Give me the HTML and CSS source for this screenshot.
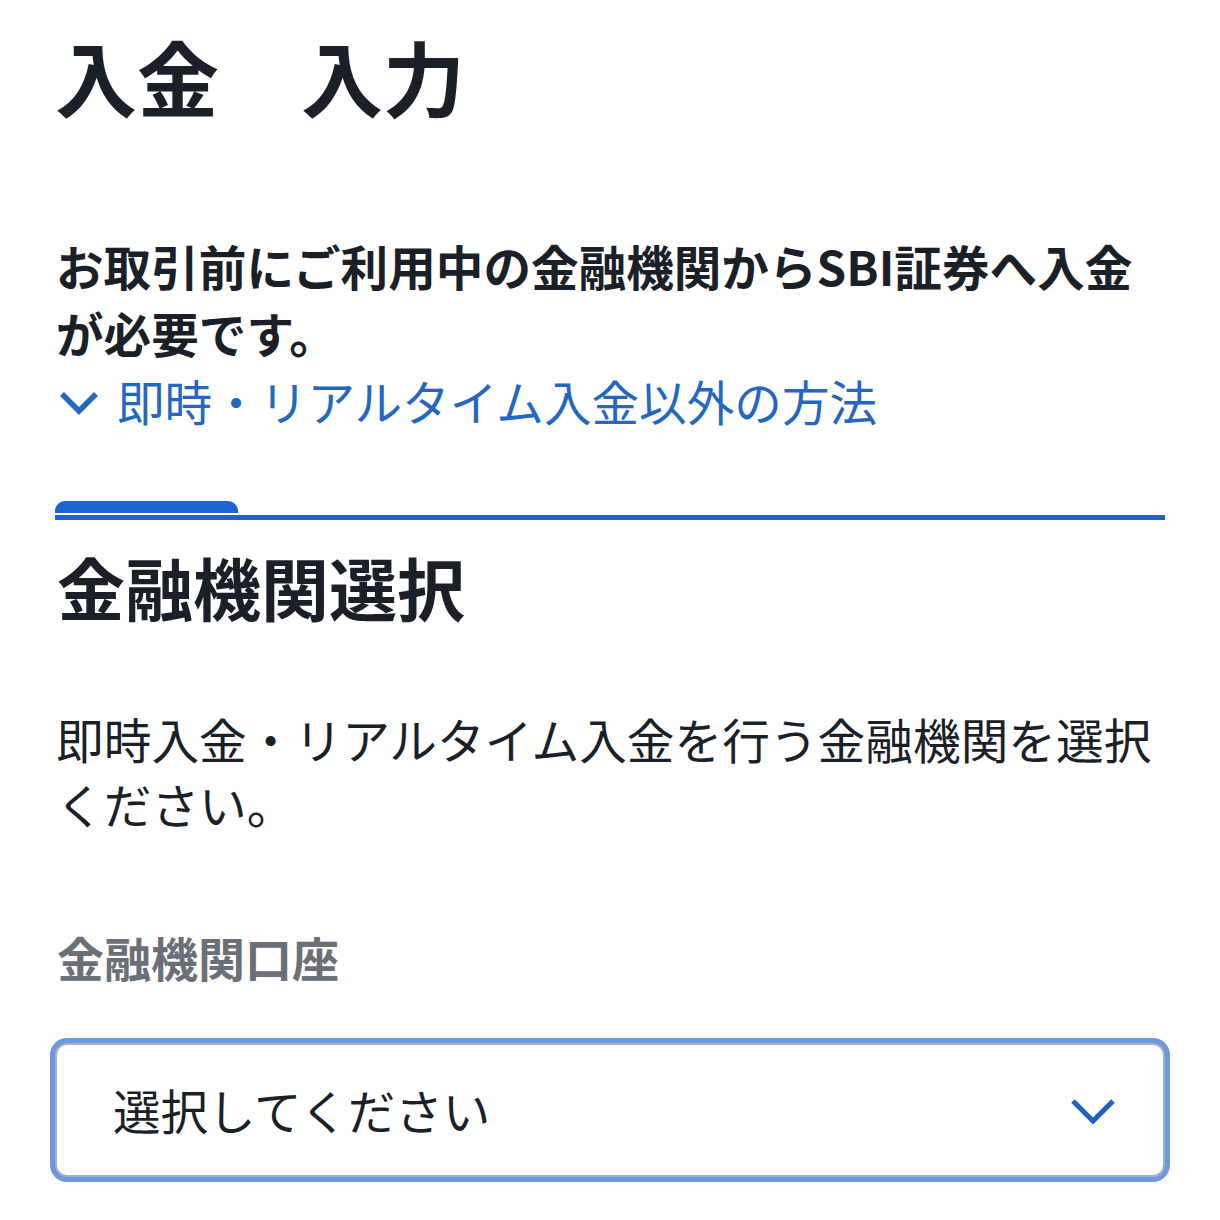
FILE: index.html
```html
<!DOCTYPE html>
<html lang="ja">
<head>
<meta charset="utf-8">
<title>入金 入力</title>
<link rel="stylesheet" href="styles.css">
</head>
<body>
<main class="page">
  <h1 class="title">入金　入力</h1>
  <p class="lead">お取引前にご利用中の金融機関からSBI証券へ入金が必要です。</p>
  <a class="toggle" href="#">
    <svg class="toggle-icon" viewBox="0 0 40 26" width="40" height="26" aria-hidden="true"><path d="M3 4 L20 21 L37 4" fill="none" stroke="currentColor" stroke-width="5.5"/></svg>
    <span>即時・リアルタイム入金以外の方法</span>
  </a>
  <div class="steps">
    <div class="step-active"></div>
  </div>
  <h2 class="section-title">金融機関選択</h2>
  <p class="desc">即時入金・リアルタイム入金を行う金融機関を選択ください。</p>
  <div class="field-label">金融機関口座</div>
  <div class="select">
    <span class="select-text">選択してください</span>
    <svg class="select-icon" viewBox="0 0 46 30" width="46" height="30" aria-hidden="true"><path d="M3 4 L23 24 L43 4" fill="none" stroke="currentColor" stroke-width="5"/></svg>
  </div>
</main>
</body>
</html>
```

FILE: styles.css
```css
* { box-sizing: border-box; }
html, body { margin: 0; padding: 0; background: #ffffff; }
body {
  font-family: "Noto Sans CJK JP", "Noto Sans", sans-serif;
  color: #1a1f28;
}
.page {
  padding: 27px 55px 40px 55px;
}
.title {
  margin: 0;
  font-size: 82px;
  line-height: 98px;
  font-weight: 700;
  letter-spacing: 0;
}
.lead {
  margin: 107px 0 0 0;
  font-size: 47.6px;
  line-height: 67px;
  font-weight: 700;
  padding-left: 1px;
}
.toggle {
  display: flex;
  align-items: center;
  gap: 18px;
  height: 70px;
  color: #2467c3;
  text-decoration: none;
  font-size: 47.6px;
  line-height: 70px;
  padding-left: 4px;
}
.toggle-icon { flex: none; width: 40px; height: 26px; margin-top: 4px; }
.steps {
  margin-top: 65px;
  border-bottom: 5px solid #1f63c4;
  height: 19px;
}
.step-active {
  width: 183px;
  height: 12px;
  background: #1c64cf;
  border-radius: 10px 10px 0 0;
}
.section-title {
  margin: 26px 0 0 0;
  font-size: 68px;
  line-height: 82px;
  font-weight: 700;
  padding-left: 2px;
}
.desc {
  margin: 78px 0 0 0;
  font-size: 47.7px;
  line-height: 65px;
  font-weight: 400;
  padding-left: 1px;
}
.field-label {
  margin-top: 91px;
  font-size: 47px;
  line-height: 60px;
  font-weight: 700;
  color: #6b7077;
  padding-left: 2px;
}
.select {
  margin-top: 56px;
  height: 134px;
  border: 2px solid #a3b0c4;
  border-radius: 12px;
  box-shadow: 0 0 0 5px #6c99dc;
  display: flex;
  align-items: center;
  justify-content: space-between;
  padding: 0 47px 0 56px;
  background: #ffffff;
}
.select-text {
  font-size: 47.5px;
  line-height: 60px;
  color: #1a1f28;
}
.select-icon { flex: none; width: 46px; height: 30px; color: #1f60c2; margin-top: 4px; }
```
